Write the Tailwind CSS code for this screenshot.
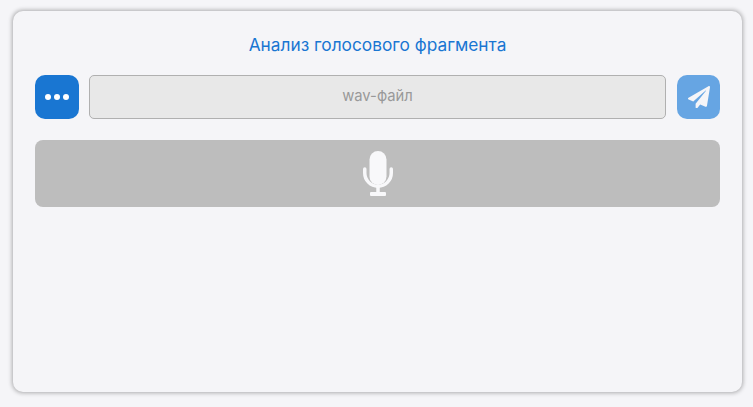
<!DOCTYPE html>
<html lang="ru">
<head>
    <meta charset="UTF-8">
    <title>Анализ голосового фрагмента</title>
    <script src="https://cdn.jsdelivr.net/npm/@tailwindcss/browser@4"></script>
</head>
<body class="bg-[#f5f5f8] w-[753px] h-[407px] overflow-hidden font-[family-name:Inter]">
    <div class="ml-[13px] mt-[11px] w-[729px] h-[381px] rounded-[10px] bg-[#f5f5f8] shadow-[0_0_4px_1px_rgba(0,0,0,0.3)] px-[22px] pt-[24px]">
        <p class="text-center text-[17.3px] leading-[20px] text-[#1976d2]">Анализ голосового фрагмента</p>

        <div class="flex items-center mt-[20px] h-[44px]">
            <button class="w-[44px] h-[44px] shrink-0 rounded-[10px] bg-[#1976d2] flex items-center justify-center gap-[3px]">
                <span class="w-[6px] h-[6px] rounded-full bg-white"></span>
                <span class="w-[6px] h-[6px] rounded-full bg-white"></span>
                <span class="w-[6px] h-[6px] rounded-full bg-white"></span>
            </button>
            <div class="ml-[10px] w-[577px] h-[44px] pb-[1px] rounded-[5px] border border-[#b0b0b0] bg-[#e8e8e8] flex items-center justify-center text-[14.8px] text-[#999999]">wav-файл</div>
            <button class="ml-[11px] w-[43px] h-[44px] shrink-0 rounded-[10px] bg-[#66a5e3] flex items-center justify-center">
                <svg class="w-[22px] h-[22px]" viewBox="0 0 512 512" fill="#f5f5f8"><path d="M476 3L12 271c-18 10-16 36 3 43l107 45 289-254c6-5 13 2 8 8L177 413v83c0 23 28 32 42 15l64-78 125 52c14 6 31-3 33-18L512 27c3-20-19-34-36-24z"/></svg>
            </button>
        </div>

        <button class="mt-[21px] w-[685px] h-[67px] rounded-[8px] bg-[#bdbdbd] flex items-center justify-center">
            <svg class="w-[30px] h-[45px]" viewBox="0 0 30 45" fill="none">
                <rect x="6.5" y="0" width="17" height="34" rx="8.5" fill="#f8f8fa"/>
                <path d="M1.75 18v4a13.25 13.25 0 0 0 26.5 0v-4" stroke="#f8f8fa" stroke-width="3.5" stroke-linecap="round"/>
                <path d="M15 36v6" stroke="#f8f8fa" stroke-width="3.5"/>
                <rect x="7" y="41" width="16" height="4" rx="1" fill="#f8f8fa"/>
            </svg>
        </button>
    </div>
</body>
</html>
